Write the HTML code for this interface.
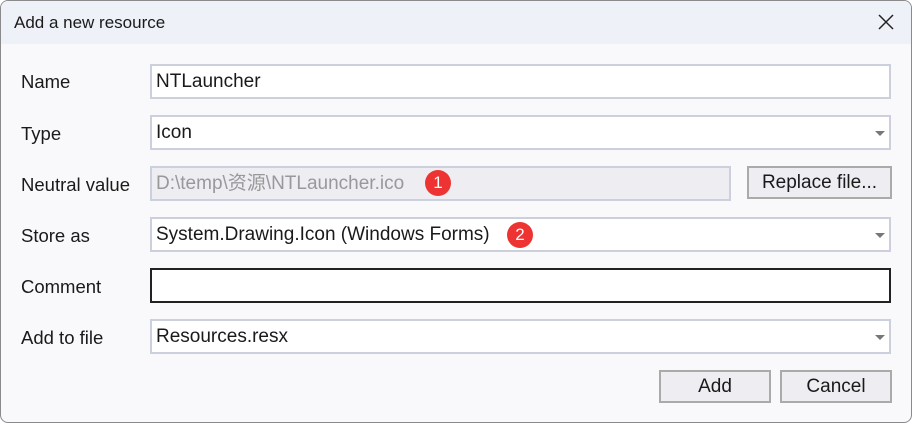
<!DOCTYPE html>
<html><head><style>
body{margin:0;width:912px;height:423px;background:#fff;font-family:"Liberation Sans","Noto Sans CJK SC",sans-serif;overflow:hidden}
.win{position:absolute;left:0;top:0;width:910px;height:421px;border:1px solid #8a8a8a;border-radius:8px;background:#f9f9fb;overflow:hidden}
.title{height:43px;background:#eef2f8;font-size:17px;line-height:43px;padding-left:13px;color:#1a1a1a}
.x{position:absolute;right:16px;top:12px}
.lbl{position:absolute;left:20px;font-size:18.5px;color:#1a1a1a}
.f{position:absolute;left:149px;width:733px;height:31px;border:2px solid #ccd0dd;background:#fff;font-size:19px;line-height:31px;padding-left:4px;box-sizing:content-box;color:#1a1a1a}
.arr{position:absolute;right:4px;top:14px;width:0;height:0;border-left:5px solid transparent;border-right:5px solid transparent;border-top:5px solid #777}
.btn{position:absolute;border:2px solid #aaa;background:#ededf2;font-size:19px;text-align:center;box-sizing:border-box;color:#1a1a1a}
.b{position:absolute;width:26px;height:26px;border-radius:50%;background:#ee3333;color:#fff;font-size:17px;text-align:center;line-height:26px}
</style></head><body>
<div class="win">
<div class="title">Add a new resource</div>
<svg class="x" width="18" height="18"><path d="M2 2L16 16M16 2L2 16" stroke="#222" stroke-width="1.5"/></svg>
<div class="lbl" style="top:70px">Name</div>
<div class="f" style="top:63px">NTLauncher</div>
<div class="lbl" style="top:122px">Type</div>
<div class="f" style="top:114px">Icon<div class="arr"></div></div>
<div class="lbl" style="top:173px">Neutral value</div>
<div class="f" style="top:165px;width:573px;background:#ededf2;color:#999">D:\temp\资源\NTLauncher.ico</div>
<div class="b" style="left:424px;top:169px">1</div>
<div class="btn" style="left:746px;top:165px;width:145px;height:33px;line-height:29px">Replace file...</div>
<div class="lbl" style="top:224px">Store as</div>
<div class="f" style="top:216px">System.Drawing.Icon (Windows Forms)<div class="arr"></div></div>
<div class="b" style="left:506px;top:221px">2</div>
<div class="lbl" style="top:275px">Comment</div>
<div class="f" style="top:267px;border-color:#222"></div>
<div class="lbl" style="top:326px">Add to file</div>
<div class="f" style="top:318px">Resources.resx<div class="arr"></div></div>
<div class="btn" style="left:658px;top:369px;width:112px;height:33px;line-height:29px">Add</div>
<div class="btn" style="left:779px;top:369px;width:112px;height:33px;line-height:29px">Cancel</div>
</div>
</body></html>
